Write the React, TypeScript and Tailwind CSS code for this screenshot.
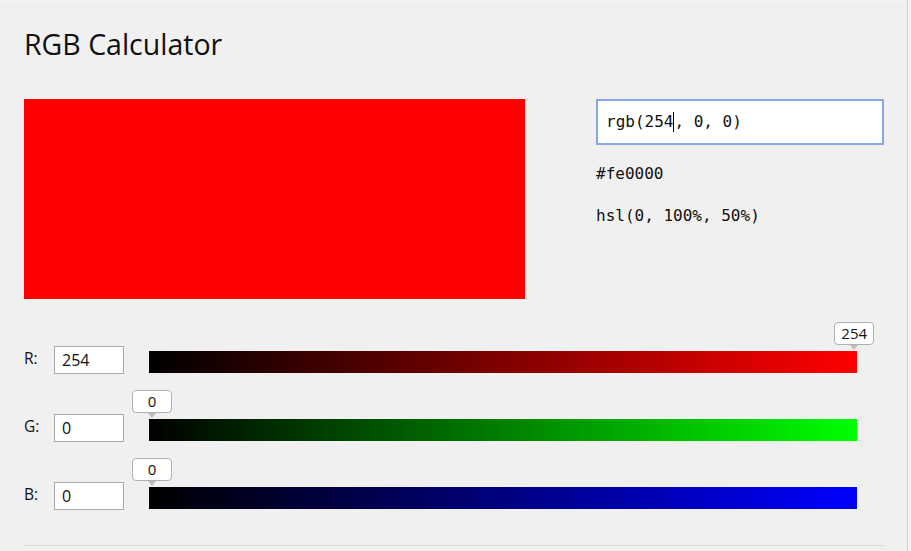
import React from "react";

const rows = [
  { label: "R:", value: 254, grad: "bg-[linear-gradient(to_right,#000000,#ff0000)]" },
  { label: "G:", value: 0, grad: "bg-[linear-gradient(to_right,#000000,#00ff00)]" },
  { label: "B:", value: 0, grad: "bg-[linear-gradient(to_right,#000000,#0000ff)]" },
];

export default function App() {
  return (
    <div className="flex h-[551px] w-[911px] bg-[#f3f3f3]">
      <div className="h-full w-[907px] border-t-2 border-[#f3f3f3] bg-[#f0f0f0] pl-6 pt-[22px]">
        <h1 className="font-['Open_Sans',sans-serif] text-[28.5px] leading-[40px] text-[#111]">RGB Calculator</h1>
        <div className="mt-[35px] flex">
          <div className="h-[200px] w-[501px] bg-[#ff0000]" />
          <div className="ml-[71px] flex flex-col font-['DejaVu_Sans_Mono',monospace] text-[16px] text-[#111]">
            <div className="flex h-[46px] w-[288px] items-center border-2 border-[#86a8e6] bg-white pl-[8px]">
              <span>rgb(254</span>
              <span className="h-[20px] w-px bg-black" />
              <span>, 0, 0)</span>
            </div>
            <div className="mt-[19px] leading-[20px]">#fe0000</div>
            <div className="mt-[22px] leading-[20px]">hsl(0, 100%, 50%)</div>
          </div>
        </div>
        <div className="mt-[47px] flex flex-col gap-[40px]">
          {rows.map((r) => (
            <div key={r.label} className="flex h-[28px] items-center font-['Open_Sans',sans-serif]">
              <div className="mb-[2px] w-[30px] text-[15.5px] text-[#111]">{r.label}</div>
              <div className="flex h-[28px] w-[70px] items-center border border-[#aaaaaa] bg-white pl-[7px] text-[16px] text-[#111]">
                {r.value}
              </div>
              <div className={`relative ml-[25px] mt-[4px] h-[22px] w-[708px] ${r.grad}`}>
                <div
                  className="absolute bottom-[23px] flex -translate-x-1/2 flex-col items-center"
                  style={{ left: 3 + (705 * r.value) / 255 }}
                >
                  <div className="flex h-[23px] w-[40px] items-center justify-center rounded-[4px] border border-[#b0b0b0] bg-white text-[15px] text-[#111]">
                    {r.value}
                  </div>
                  <div className="h-0 w-0 border-x-[4px] border-t-[5px] border-x-transparent border-t-[#bdbdbd]" />
                </div>
              </div>
            </div>
          ))}
        </div>
        <div className="mt-[35px] h-px w-[860px] bg-[#dcdcdc]" />
      </div>
      <div className="h-full w-px bg-[#d0d0d0]" />
    </div>
  );
}
